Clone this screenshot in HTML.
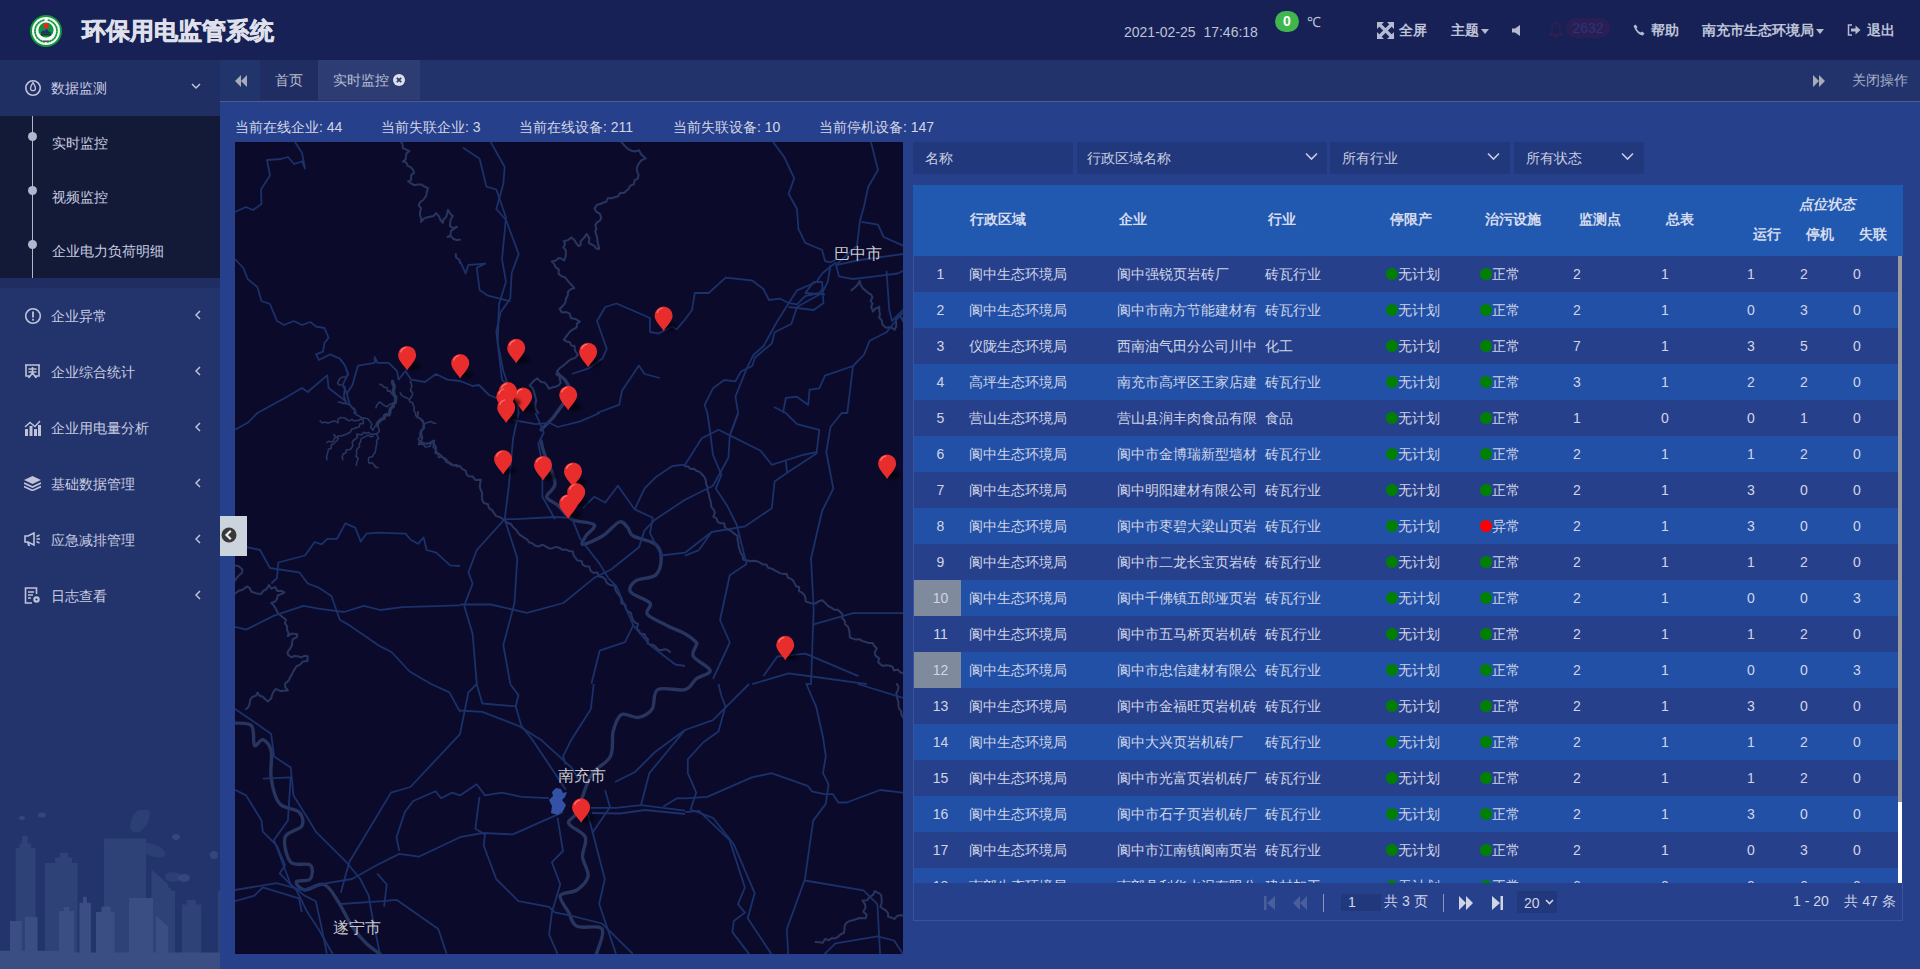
<!DOCTYPE html>
<html><head><meta charset="utf-8">
<style>
*{margin:0;padding:0;box-sizing:border-box}
html,body{width:1920px;height:969px;overflow:hidden;background:#27408c;font-family:"Liberation Sans",sans-serif;font-size:14px;color:#d4d8e6}
.abs{position:absolute}
#header{position:absolute;left:0;top:0;width:1920px;height:60px;background:#172156}
#title{position:absolute;left:82px;top:15px;font-size:24px;font-weight:bold;color:#dfe0ea;line-height:32px;letter-spacing:0px;-webkit-text-stroke:0.6px #dfe0ea}
.hdtxt{position:absolute;top:20px;line-height:20px;font-size:14px;color:#bec3d7;white-space:nowrap}
.hb{font-weight:bold}
#sidebar{position:absolute;left:0;top:60px;width:220px;height:909px;background:#23336c;overflow:hidden}
.mi{position:absolute;left:0;width:220px;height:56px}
.mi .t{position:absolute;left:51px;top:18px;line-height:20px;color:#c8cce0;font-size:14px;white-space:nowrap}
.mi .ar{position:absolute;left:193px;top:22px}
.sub{position:absolute;left:0;top:56px;width:220px;height:162px;background:#121a38}
.sub .t{position:absolute;left:52px;line-height:20px;color:#c8cce0;white-space:nowrap}
#tabbar{position:absolute;left:220px;top:60px;width:1700px;height:42px;background:#22336c;border-bottom:1px solid #4c5c92}
#content{position:absolute;left:220px;top:102px;width:1700px;height:867px;background:#27408c}
.stat{position:absolute;top:117px;line-height:20px;color:#d2d6e6;white-space:nowrap}
#map{position:absolute;left:235px;top:142px;width:668px;height:812px;background:#0b0a2b;overflow:hidden}
.flt{position:absolute;top:142px;height:32px;background:#22387c}
.flt .t{position:absolute;left:10px;top:6px;line-height:20px;color:#c8cde0}
.flt svg{position:absolute;top:10px}
#thead{position:absolute;left:913px;top:185px;width:990px;height:71px;background:#2259b0}
.th{position:absolute;font-weight:bold;color:#d6dcee;line-height:20px;white-space:nowrap}
#tbody{position:absolute;left:913px;top:256px;width:990px;height:627px;overflow:hidden;border-left:1px solid #3b539c}
.tr{position:absolute;left:0;width:985px;height:36px;line-height:36px;color:#d0d5e6;white-space:nowrap}
.tr.odd{background:#27408c}
.tr.even{background:#2250a6}
.tr span{position:absolute;top:0}
.c0{left:0;width:47px;text-align:center;padding-left:6px}
.c0.sel{background:#7f8a9c}
.c1{left:55px}.c2{left:203px}.c3{left:351px}
.c4{left:472px}.c5{left:566px}
.c6{left:659px}.c7{left:747px}.c8{left:833px}.c9{left:886px}.c10{left:939px}
.dot{display:inline-block;width:12px;height:12px;border-radius:50%;vertical-align:-1px;margin-right:0}
.dg{background:#008000}.dr{background:#ff0000}
#scroll{position:absolute;left:1898px;top:256px;width:4px;height:627px;background:#fff}
#thumb{position:absolute;left:1898px;top:256px;width:4px;height:546px;background:#9a9a9a}
#pager{position:absolute;left:913px;top:883px;width:990px;height:38px;border:1px solid #3b539c;border-top:none}
</style></head><body>
<div id="header">
  <svg class="abs" style="left:30px;top:15px" width="32" height="32" viewBox="0 0 32 32">
    <circle cx="16" cy="16" r="16" fill="#0e9a3a"/>
    <circle cx="16" cy="16" r="14" fill="#f6f8f5"/>
    <ellipse cx="13.2" cy="5.4" rx="1.6" ry="1" transform="rotate(-15 13.2 5.4)" fill="#1a9a45"/><ellipse cx="10.7" cy="6.4" rx="1.6" ry="1" transform="rotate(-29 10.7 6.4)" fill="#1a9a45"/><ellipse cx="8.5" cy="8.0" rx="1.6" ry="1" transform="rotate(-43 8.5 8.0)" fill="#1a9a45"/><ellipse cx="6.8" cy="10.0" rx="1.6" ry="1" transform="rotate(-57 6.8 10.0)" fill="#1a9a45"/><ellipse cx="5.6" cy="12.4" rx="1.6" ry="1" transform="rotate(-71 5.6 12.4)" fill="#1a9a45"/><ellipse cx="5.0" cy="15.0" rx="1.6" ry="1" transform="rotate(-85 5.0 15.0)" fill="#1a9a45"/><ellipse cx="5.1" cy="17.7" rx="1.6" ry="1" transform="rotate(-99 5.1 17.7)" fill="#1a9a45"/><ellipse cx="5.9" cy="20.3" rx="1.6" ry="1" transform="rotate(-113 5.9 20.3)" fill="#1a9a45"/><ellipse cx="7.2" cy="22.6" rx="1.6" ry="1" transform="rotate(-127 7.2 22.6)" fill="#1a9a45"/><ellipse cx="9.1" cy="24.5" rx="1.6" ry="1" transform="rotate(-141 9.1 24.5)" fill="#1a9a45"/><ellipse cx="11.4" cy="26.0" rx="1.6" ry="1" transform="rotate(-155 11.4 26.0)" fill="#1a9a45"/><ellipse cx="13.9" cy="26.8" rx="1.6" ry="1" transform="rotate(-169 13.9 26.8)" fill="#1a9a45"/><ellipse cx="17.9" cy="26.8" rx="1.6" ry="1" transform="rotate(170 17.9 26.8)" fill="#1a9a45"/><ellipse cx="20.5" cy="26.0" rx="1.6" ry="1" transform="rotate(156 20.5 26.0)" fill="#1a9a45"/><ellipse cx="22.8" cy="24.7" rx="1.6" ry="1" transform="rotate(142 22.8 24.7)" fill="#1a9a45"/><ellipse cx="24.7" cy="22.8" rx="1.6" ry="1" transform="rotate(128 24.7 22.8)" fill="#1a9a45"/><ellipse cx="26.0" cy="20.5" rx="1.6" ry="1" transform="rotate(114 26.0 20.5)" fill="#1a9a45"/><ellipse cx="26.8" cy="17.9" rx="1.6" ry="1" transform="rotate(100 26.8 17.9)" fill="#1a9a45"/><ellipse cx="27.0" cy="15.2" rx="1.6" ry="1" transform="rotate(86 27.0 15.2)" fill="#1a9a45"/><ellipse cx="26.5" cy="12.6" rx="1.6" ry="1" transform="rotate(72 26.5 12.6)" fill="#1a9a45"/><ellipse cx="25.3" cy="10.2" rx="1.6" ry="1" transform="rotate(58 25.3 10.2)" fill="#1a9a45"/><ellipse cx="23.6" cy="8.1" rx="1.6" ry="1" transform="rotate(44 23.6 8.1)" fill="#1a9a45"/><ellipse cx="21.5" cy="6.5" rx="1.6" ry="1" transform="rotate(30 21.5 6.5)" fill="#1a9a45"/><ellipse cx="19.0" cy="5.4" rx="1.6" ry="1" transform="rotate(16 19.0 5.4)" fill="#1a9a45"/>
    <circle cx="16" cy="15" r="7.6" fill="#0c9440"/>
    <circle cx="16" cy="11" r="2.7" fill="#e4261f"/>
    <path d="M10.5 18 L13 15 L14.5 16.2 L16.5 13.8 L19 16.5 L21.5 18 Z" fill="#2a2a8a"/>
    <rect x="11" y="18.3" width="10" height="2.2" fill="#1b3a22"/>
    <rect x="13" y="25.5" width="6" height="1.5" fill="#555"/>
  </svg>
  <div id="title">环保用电监管系统</div>
  <div class="hdtxt" style="left:1124px;top:22px">2021-02-25&nbsp; 17:46:18</div>
  <div class="abs" style="left:1275px;top:11px;width:24px;height:21px;border-radius:11px;background:#40b64e;color:#fff;font-weight:bold;text-align:center;line-height:21px;font-size:14px">0</div>
  <div class="hdtxt" style="left:1307px;top:12px;font-size:14px">℃</div>
  <svg class="abs" style="left:1377px;top:22px" width="17" height="17" viewBox="0 0 17 17" fill="#b4bad0">
    <path d="M0 0h7L0 7z M17 0v7L10 0z M0 17v-7l7 7z M17 17h-7l7-7z"/>
    <path d="M3 3L14 14M14 3L3 14" stroke="#b4bad0" stroke-width="3.2"/>
  </svg>
  <div class="hdtxt hb" style="left:1399px">全屏</div>
  <div class="hdtxt hb" style="left:1451px">主题</div>
  <svg class="abs" style="left:1481px;top:29px" width="8" height="5"><path d="M0 0h8L4 5z" fill="#b4bad0"/></svg>
  <svg class="abs" style="left:1512px;top:25px" width="8" height="11"><path d="M0 3.5h3L8 0v11L3 7.5H0z" fill="#b4bad0"/></svg>
  <svg class="abs" style="left:1549px;top:22px" width="14" height="16" viewBox="0 0 14 16"><path d="M7 1C4 1 3 4 3 7v4L1 13h12l-2-2V7c0-3-1-6-4-6zM5.5 14a1.5 1.5 0 0 0 3 0" fill="none" stroke="#33204c" stroke-width="1.3"/></svg>
  <div class="abs" style="left:1566px;top:18px;width:44px;height:20px;border-radius:10px;background:#2a1f55;color:#2a3574;font-size:14px;line-height:20px;text-align:center">2632</div>
  <svg class="abs" style="left:1633px;top:24px" width="12" height="12" viewBox="0 0 12 12"><path d="M2.5 0.5 L4.5 3 L3.5 4.5 Q5 7.5 7.5 8.5 L9 7.5 L11.5 9.5 L10 11.5 Q4 11 0.5 2z" fill="#b4bad0"/></svg>
  <div class="hdtxt hb" style="left:1651px">帮助</div>
  <div class="hdtxt hb" style="left:1702px">南充市生态环境局</div>
  <svg class="abs" style="left:1816px;top:29px" width="8" height="5"><path d="M0 0h8L4 5z" fill="#b4bad0"/></svg>
  <svg class="abs" style="left:1847px;top:24px" width="14" height="12" viewBox="0 0 14 12"><path d="M5 1H1.5v10H5" fill="none" stroke="#b4bad0" stroke-width="1.5"/><path d="M4 4.5h4.5V1.5L13.5 6 8.5 10.5V7.5H4z" fill="#b4bad0"/></svg>
  <div class="hdtxt hb" style="left:1867px">退出</div>
</div>

<div id="sidebar">
<div class="mi" style="top:0;background:#1f2e63">
  <svg class="abs" style="left:24px;top:19px" width="18" height="18" viewBox="0 0 18 18"><circle cx="9" cy="9" r="7.2" fill="none" stroke="#c0c4d8" stroke-width="1.6"/><path d="M9 3.5 C10.5 6 11.5 7.5 11.5 9.2 A2.5 2.5 0 0 1 6.5 9.2 C6.5 7.5 7.5 6 9 3.5z" fill="none" stroke="#c0c4d8" stroke-width="1.3"/></svg>
  <div class="t">数据监测</div>
  <svg class="abs" style="left:191px;top:23px" width="10" height="7"><path d="M1 1l4 4 4-4" fill="none" stroke="#c0c4d8" stroke-width="1.5"/></svg>
</div>
<div class="sub">
  <div class="abs" style="left:32px;top:0;width:1px;height:162px;background:#b2b6cc"></div>
  <div class="abs" style="left:28px;top:16px;width:9px;height:9px;border-radius:50%;background:#b2b6cc"></div>
  <div class="abs" style="left:28px;top:70px;width:9px;height:9px;border-radius:50%;background:#b2b6cc"></div>
  <div class="abs" style="left:28px;top:124px;width:9px;height:9px;border-radius:50%;background:#b2b6cc"></div>
  <div class="t" style="top:17px">实时监控</div>
  <div class="t" style="top:71px">视频监控</div>
  <div class="t" style="top:125px">企业电力负荷明细</div>
</div>
<div class="abs" style="left:0;top:218px;width:220px;height:10px;background:#1f2d62"></div>

<div class="mi" style="top:228px">
  <svg class="abs" style="left:24px;top:19px" width="18" height="18" viewBox="0 0 18 18"><circle cx="9" cy="9" r="7.3" fill="none" stroke="#c0c4d8" stroke-width="1.6"/><rect x="8.1" y="4.5" width="1.8" height="6" fill="#c0c4d8"/><rect x="8.1" y="11.8" width="1.8" height="1.8" fill="#c0c4d8"/></svg>
  <div class="t">企业异常</div>
  <svg class="abs" style="left:195px;top:22px" width="6" height="10"><path d="M5 1L1 5l4 4" fill="none" stroke="#c0c4d8" stroke-width="1.5"/></svg>
</div>
<div class="mi" style="top:284px">
  <svg class="abs" style="left:24px;top:19px" width="17" height="17" viewBox="0 0 17 17"><path d="M1 2h15M2 2v11h5M15 2v11h-5M4.5 6h8M4.5 9h8M8.5 4v6M8.5 10l-4 5M8.5 10l4 5" fill="none" stroke="#c0c4d8" stroke-width="1.6"/></svg>
  <div class="t">企业综合统计</div>
  <svg class="abs" style="left:195px;top:22px" width="6" height="10"><path d="M5 1L1 5l4 4" fill="none" stroke="#c0c4d8" stroke-width="1.5"/></svg>
</div>
<div class="mi" style="top:340px">
  <svg class="abs" style="left:24px;top:20px" width="17" height="16" viewBox="0 0 17 16"><rect x="1" y="9" width="3" height="7" fill="#c0c4d8"/><rect x="5.5" y="6" width="3" height="10" fill="#c0c4d8"/><rect x="10" y="9" width="3" height="7" fill="#c0c4d8"/><rect x="14" y="5" width="3" height="11" fill="#c0c4d8"/><path d="M1 7L6 2.5l5 4L16 1" fill="none" stroke="#c0c4d8" stroke-width="1.4"/></svg>
  <div class="t">企业用电量分析</div>
  <svg class="abs" style="left:195px;top:22px" width="6" height="10"><path d="M5 1L1 5l4 4" fill="none" stroke="#c0c4d8" stroke-width="1.5"/></svg>
</div>
<div class="mi" style="top:396px">
  <svg class="abs" style="left:24px;top:20px" width="17" height="15" viewBox="0 0 17 15"><path d="M8.5 0L17 4 8.5 8 0 4z" fill="#c0c4d8"/><path d="M0 7l8.5 4L17 7M0 10.5l8.5 4 8.5-4" fill="none" stroke="#c0c4d8" stroke-width="1.6"/></svg>
  <div class="t">基础数据管理</div>
  <svg class="abs" style="left:195px;top:22px" width="6" height="10"><path d="M5 1L1 5l4 4" fill="none" stroke="#c0c4d8" stroke-width="1.5"/></svg>
</div>
<div class="mi" style="top:452px">
  <svg class="abs" style="left:24px;top:20px" width="17" height="15" viewBox="0 0 17 15"><path d="M1 4h3l6-3v12l-6-3H1z" fill="none" stroke="#c0c4d8" stroke-width="1.6"/><path d="M3 10l1 4h2l-1-4" fill="#c0c4d8"/><path d="M12.5 4.5l3-1.5M12.5 7h3.5M12.5 9.5l3 1.5" stroke="#c0c4d8" stroke-width="1.4"/></svg>
  <div class="t">应急减排管理</div>
  <svg class="abs" style="left:195px;top:22px" width="6" height="10"><path d="M5 1L1 5l4 4" fill="none" stroke="#c0c4d8" stroke-width="1.5"/></svg>
</div>
<div class="mi" style="top:508px">
  <svg class="abs" style="left:24px;top:19px" width="17" height="17" viewBox="0 0 17 17"><path d="M8 16H1.5V1h11v6" fill="none" stroke="#c0c4d8" stroke-width="1.6"/><path d="M4 5h6M4 8h5M4 11h3" stroke="#c0c4d8" stroke-width="1.4"/><circle cx="12.5" cy="12.5" r="3.2" fill="#c0c4d8"/><circle cx="12.5" cy="12.5" r="1.1" fill="#22326a"/></svg>
  <div class="t">日志查看</div>
  <svg class="abs" style="left:195px;top:22px" width="6" height="10"><path d="M5 1L1 5l4 4" fill="none" stroke="#c0c4d8" stroke-width="1.5"/></svg>
</div>
<svg class="abs" style="left:0;top:750px" width="220" height="159" viewBox="0 0 220 159">
  <g fill="#2e4277">
    <path d="M15.7 159V38h3.7v-4.4h2.6v-7.8h5.7v7.8h3.4V38h4.4V159z"/>
    <path d="M45 159V53h10v-5.6h5v-4.6h8.3v4.6h3.7V53h5.6V159z"/>
    <path d="M104 159V28.4h42V159z"/>
    <path d="M151.5 159V59.4L168 74.2V159z"/>
    <path d="M163.5 159V80.7h3.7v-3h3.7v3h4.1V159z"/>
    <path d="M182 159V94.5h4.6v-4.6h9.2v4.6h5.5V159z"/>
    <path d="M218 159V80.7h2V159z"/>
    <ellipse cx="140" cy="10" rx="8" ry="14" transform="rotate(30 140 10)" opacity="0.8"/>
    <ellipse cx="152" cy="40" rx="14" ry="6" transform="rotate(20 152 40)" opacity="0.8"/>
    <ellipse cx="173" cy="67" rx="8" ry="5" opacity="0.8"/>
  </g>
  <g fill="#3a4e84">
    <path d="M10 159V111h11.8V159z"/>
    <path d="M25 159V107h12.5V159z"/>
    <path d="M0 159V140.7h59V159z"/>
    <path d="M59 159V101h4.7v-4h5.3v4h5V159z"/>
    <path d="M79.4 159V92.7h3.7v-5.9h3.7v5.9h4.1V159z"/>
    <path d="M96 159V102h5.5v-5.6h9.2v5.6h3.8V159z"/>
    <path d="M129 159V88h24V159z"/>
    <path d="M156 159V105.6L168 116.7V159z"/>
    <path d="M0 159V142.5h220V159z"/>
    <ellipse cx="22" cy="8" rx="3" ry="2" opacity="0.7"/>
    <ellipse cx="42" cy="5" rx="4" ry="2.5" opacity="0.7"/>
    <ellipse cx="176" cy="27" rx="4" ry="3" opacity="0.7"/>
    <ellipse cx="184" cy="68" rx="6" ry="4" opacity="0.7"/>
    <ellipse cx="214" cy="45" rx="4" ry="4" opacity="0.7"/>
  </g>
</svg>

</div>

<div id="tabbar">
  <div class="abs" style="left:0;top:0;width:40px;height:40px;background:#22346c"></div>
  <svg class="abs" style="left:15px;top:15px" width="13" height="12"><path d="M0 6L6 0v12z M6 6L12 0v12z" fill="#a8acb8"/></svg>
  <div class="abs" style="left:40px;top:0;width:58px;height:40px;background:#1f2d62"></div>
  <div class="abs" style="left:55px;top:10px;line-height:20px;color:#b8bdd0">首页</div>
  <div class="abs" style="left:98px;top:0;width:102px;height:40px;background:#2d3d74"></div>
  <div class="abs" style="left:113px;top:10px;line-height:20px;color:#b8bdd0">实时监控</div>
  <svg class="abs" style="left:173px;top:14px" width="12" height="12"><circle cx="6" cy="6" r="6" fill="#dde0e8"/><path d="M3.8 3.8l4.4 4.4M8.2 3.8l-4.4 4.4" stroke="#2d3d74" stroke-width="1.8"/></svg>
  <svg class="abs" style="left:1593px;top:15px" width="13" height="12"><path d="M0 0l6 6-6 6z M6 0l6 6-6 6z" fill="#a8acb8"/></svg>
  <div class="abs" style="left:1632px;top:10px;line-height:20px;color:#a8aec4">关闭操作</div>
</div>

<div id="content"></div>
<div class="stat" style="left:235px">当前在线企业: 44</div>
<div class="stat" style="left:381px">当前失联企业: 3</div>
<div class="stat" style="left:519px">当前在线设备: 211</div>
<div class="stat" style="left:673px">当前失联设备: 10</div>
<div class="stat" style="left:819px">当前停机设备: 147</div>

<div id="map">
<svg width="668" height="812" viewBox="0 0 668 812" style="position:absolute;left:0;top:0">
<g fill="none" stroke="#28355f" stroke-width="2" stroke-linejoin="round" stroke-linecap="round">
<polyline points="165.6,-0.3 167.6,2.2 167.7,6.1 174.4,9.0 171.6,11.1 170.9,14.2 170.7,17.4 168.0,19.6 171.4,20.6 172.6,23.9 175.7,25.2 177.8,27.4 179.2,30.8 176.0,33.4 176.2,37.9 173.2,39.5 176.3,41.5 179.5,43.2 183.2,42.5 186.7,42.4 188.4,44.0 193.0,46.2 192.0,49.4 191.4,53.2 189.7,56.0 187.7,58.5 185.2,59.9 183.6,63.4 186.1,66.5 185.0,69.9 185.0,73.2 186.2,76.4 186.1,79.9 188.6,76.9 191.8,75.4 195.0,74.7 198.7,73.9 201.2,71.1 203.9,74.1 205.4,77.9 207.8,80.9 208.4,77.6 211.2,75.1 212.0,71.9 213.0,67.8 215.0,71.4 217.9,74.0 215.7,77.3 215.2,81.1 214.9,84.2 218.3,86.2 222.1,84.8 219.1,86.9 216.0,88.9 215.5,93.0 212.4,95.0 215.9,94.1 218.6,97.0 221.6,98.0 225.0,97.8"/>
<polyline points="220.8,112.1 221.1,115.5 224.3,117.7 225.0,121.0"/>
<polyline points="386.5,0.4 388.6,2.5 390.6,4.8 392.7,6.8 396.3,8.7 400.0,9.5 404.0,8.3 406.2,12.3 410.7,16.4 406.1,18.4 403.4,22.3 401.8,25.7 402.0,29.2 403.6,32.9 402.8,36.6 399.6,38.3 398.8,42.4 395.2,43.7 393.5,46.9 391.2,49.0 389.0,51.0 385.3,50.8 383.2,54.3 379.9,55.3 376.6,56.3 372.8,56.1 371.2,59.9 368.0,60.6 365.3,62.1 362.1,62.8 359.5,66.3 361.2,69.6 364.9,71.8 366.3,75.6 365.1,78.5 362.0,80.4 360.3,83.1 361.5,87.2 360.1,89.0 361.1,92.4 362.2,95.8 362.5,99.5 363.3,102.9 364.3,107.0 361.1,106.4 359.0,103.7 356.2,102.4 353.8,100.6 354.4,96.1 351.5,91.8 350.0,94.7 347.8,97.0 345.7,99.4 345.6,103.3 343.6,104.0 341.4,101.4 339.8,98.5 336.5,95.4 332.7,98.2 328.8,99.2 330.1,102.1 328.4,105.3 330.7,108.2 330.9,111.2 330.6,114.3 329.3,118.5 326.1,116.5 323.8,115.9 320.4,118.8 316.8,119.4 319.2,122.1 320.7,125.4 323.8,127.4 323.7,132.1 326.7,134.3 330.1,135.4 332.1,137.9 334.1,140.4 336.3,142.7 339.3,146.1 335.3,147.4 333.0,149.9 332.7,153.8 331.0,156.5 330.5,160.1 328.8,162.8 326.4,165.2 324.6,167.0 326.8,170.5 331.1,170.1 334.5,171.4 336.0,176.1 340.2,176.9 344.9,179.6 341.9,181.6 341.7,185.4 338.5,187.2 335.6,188.8 333.1,191.9 330.7,195.1 328.8,197.6 331.4,199.4 334.5,200.1 336.4,203.5 339.5,204.0 340.0,208.5 342.8,212.8 340.3,215.9 336.0,217.2 333.0,219.4 330.5,221.8 327.7,224.0 324.9,226.0 322.0,229.2 324.7,232.6 324.6,236.6 325.8,240.9 323.6,243.3 320.8,244.7 317.6,245.3 313.9,246.7 312.0,243.3 309.8,240.5 306.0,239.9 302.3,236.4 298.7,238.9 294.7,243.4 297.6,246.0 298.8,249.0 299.6,252.1 300.5,255.2 301.2,258.3 300.5,261.8 300.3,265.1 301.3,268.2 303.3,271.0"/>
<polyline points="616.4,148.3 619.3,145.9 622.0,143.5 624.6,138.9 625.8,143.2 628.0,146.5 630.6,148.6 633.0,150.8 636.1,152.5 637.5,155.5 635.6,158.8 637.5,161.7 636.1,165.0 638.1,169.6 640.2,166.6 643.0,165.7 644.4,164.6 644.2,168.6 645.1,172.8 643.9,175.3 646.7,178.2 647.6,182.9 651.1,185.7 655.5,184.9 659.6,187.8 661.2,184.5 661.1,180.7 661.1,176.8 662.6,173.6 666.3,175.3 668.0,179.0"/>
<polyline points="183.1,270.0 182.4,274.8 185.4,276.9 187.8,279.5 188.5,281.8 189.3,285.5 186.9,288.3 186.1,291.6 187.3,295.5 186.3,298.7 184.5,301.0 188.0,300.8 191.4,302.0 194.9,300.8 198.7,301.6 201.1,305.4 200.3,311.1 204.3,311.9 206.9,314.4 209.4,317.0 211.5,320.2 215.3,321.0 218.1,323.6 221.7,323.1 224.9,324.1 227.0,326.9 230.6,328.6 231.5,332.3 233.7,334.2 237.6,334.5 240.6,338.1 245.8,337.8 245.2,341.3 244.7,344.6 245.8,347.8 247.1,351.0 246.9,354.3 247.2,357.7 248.8,361.0 253.0,362.3 253.9,366.1 257.0,368.2 258.9,370.9 261.1,374.1 264.6,375.0 267.6,376.8 270.4,379.1 272.8,381.0 276.2,382.2 277.8,384.9 280.2,387.0 282.3,389.4 283.9,392.1 286.6,393.9 289.2,395.8 292.1,397.3 294.1,400.4 297.3,401.3 300.3,403.7 303.6,404.5 307.3,402.7 310.5,404.3 313.6,406.2 316.9,406.4 320.8,404.9 324.1,405.7 327.1,407.7 330.7,407.4 333.8,408.9 337.9,409.6 338.6,413.4 340.6,415.9 342.5,418.5 346.6,418.9 347.6,422.6 350.5,424.3 354.3,424.6 355.6,428.7 358.2,430.8 362.5,430.4 363.7,434.4 367.7,435.1 370.3,437.5 372.0,441.2 375.2,443.0 379.8,443.8 380.3,447.0 381.4,449.9 383.4,452.4 385.3,454.9 386.3,457.9 386.4,461.4 390.4,462.8 390.7,466.7 392.9,469.3 396.0,471.2 396.9,474.7 397.9,478.0 399.9,480.4 403.0,482.0 401.8,486.4 404.1,488.6 405.2,491.5 409.5,492.3 410.7,495.2 413.0,497.3 412.5,501.3 415.3,502.5 418.3,503.0 420.8,504.9 423.1,507.6 426.1,508.2 429.6,507.3 432.5,507.8 435.0,510.0"/>
<polyline points="0.5,451.3 3.8,448.7 7.7,447.8 12.0,444.4 14.8,446.1 16.4,449.8 19.7,450.7 21.5,451.5 26.1,451.9 28.2,448.9 31.4,447.3 34.0,442.9 36.2,446.6 40.2,445.1 42.3,448.9 46.0,448.7 49.4,450.4 46.3,452.1 42.9,453.2 41.9,457.2 39.7,459.8 36.2,461.0 38.6,463.4 40.4,466.0 41.7,468.8 42.9,470.9 45.4,473.2 47.9,475.4 51.0,477.7 49.9,481.3 52.1,484.4 51.9,487.9 53.6,491.1 52.8,494.1 56.7,491.6 62.3,492.2 61.7,495.4 57.9,497.0 57.1,500.1 57.0,503.3 55.0,506.8 52.5,510.1 53.0,512.8 56.3,515.3 59.6,514.0 62.9,514.2 66.1,515.4 69.4,513.8 72.7,514.2 72.5,519.1 68.0,519.5 64.7,522.9 61.5,524.2 59.9,526.9 58.2,529.4 56.9,532.4 55.2,534.9 54.1,538.0 52.0,540.2 50.3,540.9 50.2,545.2 52.9,548.5 49.2,548.8 45.5,549.1 40.8,546.9 38.6,549.6 37.1,552.8 36.1,556.4 32.8,559.4 30.2,557.2 27.8,554.7 24.3,553.5 22.5,550.5 21.1,553.6 17.2,555.0 15.3,557.7 14.7,561.4 13.7,564.7 11.1,567.0"/>
<polyline points="-1.0,423.3 3.9,424.2 7.4,427.8 6.8,431.3 3.9,433.3 1.8,435.9 0.0,438.7"/>
<polyline points="450.0,324.2 453.3,324.6 455.6,327.0 459.2,326.8 461.6,329.0 464.7,329.9 467.1,332.5 469.5,335.2 470.8,338.4 471.1,342.0 472.5,345.1 472.5,348.7 473.9,351.8 474.3,355.2 475.4,358.3 476.0,361.6 476.3,364.9 478.8,367.7 479.8,370.8 478.3,374.6 481.5,376.4 482.8,379.8 485.4,381.3 489.1,381.3 489.9,385.3 492.2,387.2 495.2,388.2 497.5,390.2 499.3,391.7 502.7,394.0 502.4,397.6 503.5,400.8 503.5,404.3 504.6,407.4 505.6,410.6 507.5,413.4 508.3,417.8 511.7,418.2 514.9,419.3 518.6,418.8 521.9,419.2 525.0,420.6 527.9,422.4 531.3,422.6 533.5,426.1 536.7,426.6 539.4,428.2 542.2,429.6 544.9,431.1 548.0,431.9 551.5,431.7 553.0,435.7 555.6,436.6 558.0,438.6 559.6,441.2 560.9,444.0 564.3,445.3 564.0,449.2 567.1,450.7 569.3,452.9 570.4,455.8 570.7,459.2 572.9,460.3 576.8,461.4 580.4,461.6 583.6,459.2 587.3,458.2 589.6,460.2 591.6,462.5 593.9,464.5 596.7,465.8 599.1,467.7 602.7,467.8 605.0,469.7 607.5,472.2 607.1,476.0 609.7,478.7 610.0,482.2 613.1,484.7 614.1,488.0 614.6,491.4 614.8,495.5 617.9,496.6 621.1,497.6 624.7,497.3 627.6,499.2 630.9,500.0 634.0,501.1 637.6,500.9 638.9,503.5 641.9,506.5 639.7,510.3 640.4,513.6 644.2,516.5 643.1,520.0 645.4,522.3 648.0,523.9 651.5,523.3 654.5,523.8 657.5,524.8 659.0,528.5 663.0,527.6 665.1,530.2 668.0,531.3"/>
<polyline points="580.6,800.1 584.2,800.3 587.8,800.8 590.0,796.9 593.9,798.2 596.7,796.1 600.3,796.4 603.2,794.7 605.3,792.5 609.0,790.9 609.4,787.4 609.7,783.7 611.3,780.9 614.5,779.0 617.8,778.3 621.1,777.2 624.3,776.0 627.8,776.2 630.5,776.3 631.8,772.7 628.3,769.8 630.4,766.0 630.2,762.6 627.5,758.5 632.2,758.2 634.5,755.2 637.8,753.2 639.9,749.0 642.6,750.7 645.4,752.2 646.3,753.5 646.7,757.6 646.6,761.5 645.3,764.8 647.9,766.7 650.7,768.3 652.8,770.7 653.2,774.8 656.1,775.4 659.6,777.0 661.9,773.9 664.9,773.3 668.0,773.4"/>
<polyline points="661.9,542.0 663.4,544.9 663.1,547.9 661.3,551.2 661.9,554.2 662.5,557.1 663.5,560.1 663.4,563.5 664.1,566.6 666.2,569.3 666.4,572.6 668.0,575.5"/>
</g><g fill="none" stroke="#28355f" stroke-width="1.6" stroke-linejoin="round" stroke-linecap="round">
<polyline points="85.0,278.9 87.4,280.9 89.9,280.1 92.3,280.9 94.7,280.6 97.1,279.6 99.6,278.9 103.0,280.9 102.9,277.3 105.4,275.6 107.8,275.7 110.1,276.1 112.1,277.8 114.2,278.9 116.9,277.4 118.9,279.0 121.1,278.5 123.6,278.4 125.7,277.3 128.3,275.9 130.6,276.3 132.8,276.8 133.9,278.3 135.6,280.2 136.9,282.3 135.5,285.0 137.9,288.2 139.0,285.7 140.5,283.9 142.9,283.6"/>
<polyline points="103.4,260.1 105.7,260.2 107.8,261.4 110.2,261.2 112.4,262.0 114.8,262.6 116.3,264.5 117.7,266.4 119.5,266.4 119.8,268.9 119.1,270.9 121.3,272.7 123.8,273.9 126.3,275.5 128.1,278.1 128.4,281.8 125.1,281.6 124.1,285.0 121.3,285.6 118.8,286.7 116.5,287.3 115.5,290.0 113.4,291.0 111.4,292.2 108.9,293.0 106.6,294.0 103.7,293.8 101.6,295.2 99.5,296.0 98.5,299.1 96.4,300.0 93.6,299.2 91.8,300.6"/>
<polyline points="111.1,228.3 112.9,230.2 113.3,232.3 111.1,234.9 107.9,235.0 105.3,236.0 104.0,238.0 102.6,241.3 104.2,243.0 107.4,243.0 109.9,244.9 110.1,247.1 109.3,249.6 109.2,251.9 108.8,254.3 109.8,256.5 110.3,258.7 111.1,260.9"/>
<polyline points="144.7,242.2 147.3,243.2 149.1,245.1 152.0,245.7 152.7,249.1 155.4,248.9 156.3,251.7 158.8,251.8"/>
<polyline points="140.9,265.7 141.9,262.9 144.4,260.0 146.9,261.5 149.2,263.6 152.2,264.8 154.4,262.2 157.6,262.1"/>
<polyline points="165.1,250.8 166.7,253.3 168.9,254.8 171.4,255.8 174.1,257.1 174.7,259.7 177.5,260.7 178.2,263.2 179.3,265.5 178.8,268.5 180.5,270.7 180.7,273.5 182.6,275.6 185.3,276.6 187.5,278.1 189.3,281.5 191.6,281.0 194.0,280.1 196.4,279.5 198.5,281.1 200.8,281.3"/>
<polyline points="175.3,239.4 176.2,241.6 176.9,243.9 176.0,246.2 175.5,248.6 177.6,250.9 177.4,253.4 175.9,255.4 174.7,257.5"/>
<polyline points="189.6,282.6 188.0,284.3 188.4,286.9 185.9,288.3 185.2,290.4 184.9,292.7 185.4,295.1 183.0,297.1 184.6,299.6 183.5,302.6 186.3,301.9 188.6,302.8 190.3,305.0 192.4,304.8 195.2,304.3 195.6,301.8 196.4,299.5 199.3,298.3 199.0,300.6 198.6,303.0 198.1,305.4 200.4,306.9 201.4,309.6 203.3,311.6 203.5,315.4 206.9,314.9 209.3,316.0 211.5,317.5 213.2,319.6 214.9,322.4 217.4,323.0 219.9,323.3 222.2,324.7 225.0,324.0"/>
<polyline points="142.8,284.7 144.2,287.1 144.3,289.4 142.0,291.4 142.2,293.7 143.7,296.3 141.5,298.3 141.9,300.7 141.4,303.0 141.0,305.4 140.6,307.8 140.2,310.2 138.6,312.2 137.5,314.6 134.0,315.6 133.3,317.9 134.0,321.2 137.2,320.8 139.0,322.5 140.4,325.0 142.9,325.6"/>
<polyline points="142.0,291.8 139.1,292.1 136.1,292.4 133.8,290.5 131.6,291.2 129.0,290.2 127.2,292.6 124.8,292.6 121.5,292.2 122.5,295.4 120.4,297.0 118.3,298.5 117.2,300.7 117.9,303.7 116.5,306.1 114.8,307.8 111.4,307.8 111.0,310.8 108.1,311.9 107.2,314.6 107.7,317.7"/>
<polyline points="138.4,294.2 135.8,294.7 133.1,293.1 130.6,294.4 128.7,295.4 126.1,296.9 125.5,299.8 124.2,301.9 124.6,304.6 122.2,307.0 121.3,309.6 121.9,311.9 120.9,314.1 123.2,316.6 122.4,318.8 121.6,321.0 121.3,323.3"/>
<polyline points="98.8,292.4 100.5,294.6 103.4,296.3 102.2,298.4 100.3,300.0 98.7,301.8 96.2,303.0 96.3,306.2 93.3,307.3 92.9,309.9 92.1,312.4 91.6,315.0 91.8,317.7"/>
<polyline points="142.0,282.7 143.1,280.4 144.8,278.7 146.6,277.1 149.1,276.4 149.6,273.5 151.5,272.6 154.1,272.9 154.7,270.8 155.0,268.4 155.8,266.1 158.1,264.4 158.3,262.0 160.5,260.0 160.4,257.7 160.9,255.4 159.0,252.9 158.7,250.9 158.3,248.7 159.0,246.2 159.1,243.8 157.9,241.7 157.6,239.4" stroke-width="3.4"/>
</g><g fill="none" stroke="#28355f" stroke-width="3.4" stroke-linejoin="round" stroke-linecap="round">
<path d="M306.0,299.0 C306.5,300.8 306.5,303.0 308.8,310.0 C311.1,317.0 319.5,333.4 320.0,340.9 C320.5,348.4 311.1,351.1 311.6,354.8 C312.1,358.5 318.6,359.5 322.8,363.2 C327.0,366.9 330.7,373.9 336.8,377.2 C342.9,380.5 356.9,380.0 359.2,382.8 C361.5,385.6 352.7,390.7 350.8,394.0 C348.9,397.3 345.2,402.4 348.0,402.4 C350.8,402.4 361.4,397.7 367.5,394.0 C373.6,390.3 380.1,381.4 384.3,380.0 C388.5,378.6 390.4,383.3 392.7,385.6 C395.0,387.9 393.6,391.2 398.3,394.0 C403.0,396.8 416.0,398.7 420.6,402.4 C425.2,406.1 426.2,411.2 426.2,416.3 C426.2,421.4 424.8,429.4 420.6,433.1 C416.4,436.8 405.2,435.9 401.0,438.7 C396.8,441.5 393.2,446.2 395.5,449.9 C397.8,453.6 412.2,457.3 415.0,461.0 C417.8,464.7 409.5,468.5 412.3,472.2 C415.1,475.9 425.5,480.1 431.8,483.4 C438.1,486.7 445.1,489.0 450.0,491.8 C454.9,494.6 459.1,498.1 461.0,500.0 C462.9,501.9 461.6,500.9 461.2,503.3 C460.8,505.7 456.1,510.3 458.4,514.5 C460.7,518.7 474.7,524.8 475.2,528.5 C475.7,532.2 465.4,533.7 461.2,536.9 C457.0,540.1 456.4,545.8 450.0,547.6 C443.6,549.4 428.2,544.4 422.7,547.6 C417.2,550.8 420.4,562.4 417.2,567.0 C413.9,571.6 408.3,574.5 403.2,575.4 C398.1,576.3 390.7,570.3 386.5,572.6 C382.3,574.9 380.1,582.3 378.2,589.3 C376.3,596.3 379.1,607.0 375.4,614.4 C371.7,621.8 361.5,624.6 355.9,633.9 C350.3,643.2 345.7,662.2 342.0,670.1 C338.3,678.0 332.2,677.0 333.6,681.2 C335.0,685.4 348.0,689.6 350.3,695.2 C352.6,700.8 347.0,708.2 347.5,714.7 C348.0,721.2 354.0,728.6 353.1,734.1 C352.2,739.6 346.6,744.8 342.0,748.0 C337.4,751.2 326.7,749.9 325.3,753.6 C323.9,757.3 330.8,765.2 333.6,770.3 C336.4,775.4 336.4,781.5 342.0,784.3 C347.6,787.1 363.8,782.4 367.0,787.0 C370.2,791.6 362.4,807.7 361.5,811.8"/>
<path d="M306.0,287.8 C307.9,285.9 314.6,279.4 317.2,276.6 C319.8,273.8 319.6,273.4 321.4,271.0 C323.2,268.6 325.7,265.5 328.0,262.0 C330.3,258.5 334.7,254.0 335.0,250.0 C335.3,246.0 332.2,241.0 330.0,238.0 C327.8,235.0 323.3,233.0 322.0,232.0"/>
<path d="M0.0,581.0 C2.8,581.5 13.4,580.1 16.7,583.8 C19.9,587.5 17.6,601.0 19.5,603.3 C21.4,605.6 25.0,596.8 27.8,597.7 C30.6,598.6 34.8,602.3 36.2,608.8 C37.6,615.3 34.8,627.9 36.2,636.7 C37.6,645.5 40.0,656.2 44.6,661.7 C49.2,667.2 60.3,666.3 64.0,670.0 C67.7,673.7 69.1,679.8 66.8,684.0 C64.5,688.2 52.0,689.2 50.1,695.2 C48.2,701.2 51.5,715.6 55.7,720.2 C59.9,724.8 72.0,720.2 75.2,723.0 C78.5,725.8 77.5,734.2 75.2,737.0 C72.9,739.8 62.2,737.9 61.3,739.7 C60.4,741.5 65.0,747.5 69.6,748.0 C74.2,748.5 83.5,740.6 89.1,742.5 C94.7,744.4 98.3,752.2 103.0,759.2 C107.7,766.2 112.3,777.3 117.0,784.3 C121.7,791.3 126.3,796.4 130.9,801.0 C135.5,805.6 142.5,810.0 144.8,811.8"/>
</g><g fill="none" stroke="#1a3169" stroke-width="1.8" stroke-linejoin="round">
<polyline points="0.0,70.0 11.0,65.0 18.0,68.0 26.5,62.0 26.0,47.5 35.0,33.5 32.0,18.0 46.0,17.0 53.0,15.0 59.0,22.0 67.0,19.5 70.0,26.5 67.0,11.0 60.0,0.0"/>
<polyline points="0.0,117.0 8.4,126.0 12.6,137.0 22.4,145.0 26.5,159.0 35.0,162.0 42.0,179.0 49.0,183.0 58.7,179.0 67.0,183.0 75.5,180.0 81.0,184.5 89.4,186.0 93.6,195.6 89.4,201.0 88.0,209.6 81.0,212.4 84.0,218.0 95.0,212.4 104.8,216.6 110.0,223.6 113.0,232.0 107.6,243.0 111.8,251.5 114.6,262.7 121.6,271.0"/>
<polyline points="0.0,287.8 12.6,280.8 22.4,271.0 50.3,255.7 67.0,246.0 72.7,250.0 92.2,233.4 93.6,246.0 111.8,260.0"/>
<polyline points="111.8,251.5 117.4,243.0 123.0,223.6 139.7,220.8 139.7,215.0 142.5,220.8 153.7,220.8 162.0,229.0 163.5,237.6 170.5,229.0 176.0,237.6 190.0,240.0 201.0,232.0 212.4,237.6 225.0,239.0 237.6,244.0 244.0,243.0 254.0,253.0 264.0,257.0"/>
<polyline points="255.7,0.0 269.7,25.0 268.3,42.0 261.3,67.0 271.0,78.0 283.7,112.0 276.7,131.0 275.3,156.5 265.5,170.5 261.3,190.0 264.0,212.4 267.0,237.6 281.0,251.5 283.7,271.0 278.1,296.2 273.9,343.7 269.7,377.2 282.3,416.3 279.5,461.0 268.3,503.0 275.3,541.8"/>
<polyline points="227.8,5.6 244.6,16.8 251.5,44.7 261.3,47.5 271.0,75.5 267.0,117.4 271.0,139.7 264.0,162.0 262.7,201.0 268.3,229.0 274.0,246.0"/>
<polyline points="225.0,118.8 230.6,131.4 233.4,123.0 250.2,121.6 241.8,125.8 244.6,148.0 253.0,153.7 275.3,159.3"/>
<polyline points="336.8,232.0 353.6,226.4 367.5,216.6 371.7,206.8 362.0,179.0 370.3,165.0 381.5,161.5 415.0,176.0 415.0,190.0 423.4,191.5 437.4,184.5 441.6,187.3 450.0,177.5 457.0,168.0 459.8,151.0 473.8,151.0 490.6,135.7 517.2,138.5 528.4,147.0 534.0,158.0 545.2,156.7 553.6,161.0 562.0,162.3 570.3,154.0 584.3,151.0 588.5,145.5"/>
<polyline points="362.0,271.0 384.3,262.7 387.0,248.7 403.9,223.6 409.5,232.0 424.8,236.0"/>
<polyline points="538.2,0.0 549.4,15.4 559.2,36.4 553.6,51.8 562.0,67.0 563.4,86.8 570.3,100.8 580.0,105.0 587.1,107.8 590.0,119.0 595.5,120.3 601.0,117.5"/>
<polyline points="636.0,0.0 643.0,28.0 633.3,44.8 629.0,64.4 625.0,78.4 622.0,103.6 601.0,123.0 604.0,134.3 618.0,137.0 640.3,134.3 662.7,131.5 668.0,128.7"/>
<polyline points="626.3,79.8 643.0,82.6 648.7,95.0 668.0,103.6"/>
<polyline points="601.0,123.0 625.0,118.0 668.0,112.0"/>
<polyline points="601.0,120.3 587.1,131.5 581.5,140.0 562.0,148.3 542.4,179.0 528.4,204.3 518.6,212.7 511.6,226.7 500.4,254.7 503.2,271.0 494.8,293.4 493.4,315.8 478.0,343.8 450.0,357.8 420.6,377.2 409.5,388.4 404.0,405.2 376.0,427.5 359.2,435.9 328.4,461.0 292.0,470.8 255.7,462.5 225.0,462.5"/>
<polyline points="595.5,123.0 592.7,140.0 587.1,151.0 562.0,165.0 556.3,182.0 539.6,190.3 536.8,201.5 520.0,215.5 517.2,224.0 506.0,229.5 500.4,239.3 489.2,238.0 478.0,246.3 469.6,263.0 472.4,271.0 475.2,290.6 478.0,313.0 486.4,332.6 480.8,346.6 492.0,363.4 501.8,383.0 511.6,422.1 494.8,433.3 485.0,478.0 494.8,500.5 478.0,536.9"/>
<polyline points="553.6,165.0 578.7,168.0 588.5,161.0 587.1,140.0 578.7,140.0 570.3,151.0 590.0,152.5"/>
<polyline points="548.0,271.0 550.8,256.0 562.0,254.7 573.2,263.0 574.6,247.7 584.3,246.3 590.0,233.7 618.0,224.0 629.0,212.7 634.7,198.7 651.5,190.3 662.7,176.3 668.0,170.7"/>
<polyline points="618.0,224.0 612.3,271.0 606.7,271.0 595.5,285.0 591.3,310.2 598.3,346.6 587.1,369.0 576.0,416.5 578.7,466.9 576.0,542.2 571.3,542.0 581.0,564.3 588.0,595.0 590.8,614.5 588.0,631.2 593.6,642.4 590.8,661.9 578.2,678.6 569.9,737.2 551.8,787.3 553.2,812.1"/>
<polyline points="651.5,128.7 654.3,168.0 657.0,179.0 668.0,168.0"/>
<polyline points="11.2,405.0 25.0,408.0 35.0,426.0 44.7,427.5 64.3,430.3 72.7,441.5 83.8,445.7 96.4,454.0 104.8,477.8 114.6,483.4 145.3,504.4 156.5,510.0 174.7,529.5 195.6,541.8 214.4,550.4 225.0,569.8"/>
<polyline points="36.3,441.5 42.0,436.0 43.3,420.5 70.0,413.5 79.7,400.0 86.6,402.4 92.2,396.8 102.0,396.8 110.4,381.4 120.2,385.6 125.8,399.6 131.4,391.7 142.5,390.6 170.5,391.7 176.0,398.0 183.0,401.8 188.7,395.4 191.5,408.0 201.2,410.7 215.2,423.3 225.0,424.0"/>
<polyline points="0.0,484.8 11.2,487.6 39.0,473.6 68.5,463.8 83.8,466.6 109.0,470.0 128.6,463.8 145.3,468.0 167.7,465.2 225.0,463.3"/>
<polyline points="269.7,377.2 280.9,377.2 320.0,375.0 336.8,375.8 345.2,396.8 364.7,421.9 373.1,435.9 381.5,444.3 398.3,483.4 415.0,503.0 440.2,522.5 450.0,524.0"/>
<polyline points="269.7,377.2 241.8,408.0 233.4,430.3 237.6,441.5 229.2,463.8 237.6,491.8 241.8,541.8"/>
<polyline points="278.1,278.0 300.5,282.2 314.4,280.8 322.8,285.0 345.2,279.4 364.7,271.0"/>
<polyline points="300.5,271.0 308.8,290.6 303.3,301.7 307.4,321.3 307.4,354.8 320.0,377.2"/>
<polyline points="348.0,366.0 359.2,354.8 370.3,360.5 382.9,343.7 399.7,367.4 417.8,375.8 415.0,391.2 426.2,413.5 450.0,410.7 476.6,390.0 510.2,384.3 536.8,366.2 539.6,339.6 553.6,329.8 581.5,311.6 584.3,287.8 562.0,282.2 550.8,271.0 539.0,265.0"/>
<polyline points="399.7,367.4 409.5,346.5 420.6,335.3 437.4,324.0 450.0,322.7 466.8,296.2 483.6,287.8 494.8,293.4 525.6,308.8 536.8,322.8 567.5,313.0 581.5,310.2"/>
<polyline points="550.8,318.6 552.2,331.2"/>
<polyline points="503.2,271.0 494.8,293.4"/>
<polyline points="464.0,408.1 450.0,413.7"/>
<polyline points="476.6,390.0 464.0,408.1"/>
<polyline points="398.3,483.4 390.0,500.2 364.7,508.6 356.4,541.8"/>
<polyline points="578.7,482.3 618.0,471.1 668.0,471.1"/>
<polyline points="517.2,542.2 553.6,531.3 584.3,535.5 632.0,542.2"/>
<polyline points="528.4,534.1 542.4,514.5 570.3,511.7 623.5,534.1"/>
<polyline points="0.0,567.0 16.7,578.2 36.2,592.1 39.0,614.4 55.7,625.5 58.5,653.4 72.4,675.7 80.8,689.6 111.4,720.2 125.3,737.0 133.7,753.6 136.5,770.3 144.8,811.8"/>
<polyline points="0.0,647.8 11.1,653.4 26.5,678.5 27.8,689.6 41.8,703.5 50.1,723.0 44.6,731.4 61.3,748.0 72.4,770.3 83.5,787.0 97.5,811.8"/>
<polyline points="27.8,636.7 55.7,635.3 52.9,678.5 39.0,698.0 55.7,742.5 69.6,753.6 80.8,759.2 86.3,784.3 91.9,811.8"/>
<polyline points="105.8,750.8 114.2,720.2 156.0,650.6 175.4,645.0 225.0,592.1 233.4,550.4 241.7,542.0 247.3,561.5 280.7,564.3 283.5,553.1 275.1,542.0"/>
<polyline points="0.0,748.0 41.8,741.1 66.8,748.0 91.9,741.1 117.0,737.0 142.0,723.0 164.3,711.9 183.8,714.7 225.0,695.2 247.3,691.0 277.9,692.4 328.0,670.1"/>
<polyline points="0.0,759.2 19.5,753.6 27.8,745.3 64.0,756.4 66.8,770.3"/>
<polyline points="164.3,709.0 161.5,695.2 169.9,670.0 178.2,659.0 200.5,649.2 206.0,656.2 217.2,650.6 225.0,653.4 241.7,642.3 250.0,653.4 266.8,650.6 286.3,654.8 314.1,656.2"/>
<polyline points="105.8,762.0 147.6,759.2 161.5,757.8 203.3,787.0 211.6,811.8"/>
<polyline points="142.0,731.4 151.8,742.5 149.0,764.8"/>
<polyline points="225.0,568.5 247.3,569.8 283.5,583.8 305.8,597.7 336.4,625.5 345.0,640.0"/>
<polyline points="280.7,564.3 286.3,583.8 297.4,597.7 330.8,647.8"/>
<polyline points="358.7,542.0 355.9,567.0 336.4,597.7 328.0,614.4 330.8,622.8"/>
<polyline points="355.9,665.9 381.0,665.9 406.0,663.1 450.0,668.7"/>
<polyline points="357.0,671.0 385.0,671.5 410.0,668.0 450.0,672.0"/>
<polyline points="406.0,663.1 414.4,631.1 450.0,588.0 477.9,578.2 497.4,558.7 514.1,542.0"/>
<polyline points="428.3,664.5 442.2,656.2 450.0,656.3 472.3,654.9 516.9,635.4 536.4,631.2 572.7,643.8 576.8,649.3 589.4,652.1 597.8,652.1 603.3,660.5 611.7,660.5 645.1,648.0 668.0,650.7"/>
<polyline points="244.5,654.8 240.3,686.8 250.0,692.4 248.7,703.5 261.2,737.0 283.5,759.2 314.1,764.8 319.7,770.3 333.6,773.1 367.0,781.5 397.7,811.8"/>
<polyline points="353.1,672.9 369.8,737.0 364.2,762.0 381.0,811.8"/>
<polyline points="322.5,675.7 328.0,709.0 316.9,720.2 325.3,742.5 316.9,770.3 314.1,792.6 322.5,811.8"/>
<polyline points="370.0,648.0 375.0,665.0 358.0,690.0"/>
<polyline points="483.5,542.0 486.2,553.2 490.4,564.3 483.5,589.4 468.1,600.5 452.8,617.3 452.8,631.2 461.2,650.7 455.6,667.5 477.9,675.8 498.8,702.3 519.7,751.1 512.7,776.2 536.4,812.1"/>
<polyline points="450.0,670.2 463.9,668.9 494.6,698.1 509.9,745.5 503.0,762.2 509.9,770.6 498.8,779.0 497.4,790.1 514.1,812.1"/>
<polyline points="569.9,738.5 628.4,748.3 642.4,762.2 645.1,812.1"/>
<polyline points="589.4,812.1 600.5,801.3 642.4,794.3 659.1,798.5 668.0,812.1"/>
<polyline points="622.8,542.0 668.0,556.0"/>
<polyline points="450.0,588.0 420.0,610.0 400.0,630.0 380.0,640.0"/>
</g>
<path d="M321,646 L326,647 L328,651 L332,650 L330,655 L327,658 L331,663 L328,669 L323,673 L316,671 L317,664 L314,658 L318,654 L317,650 Z" fill="#3352a6"/>
<text x="599" y="117" fill="#c9c9cf" font-size="16" font-family="Liberation Sans, sans-serif">巴中市</text>
<text x="323" y="639" fill="#c9c9cf" font-size="16" font-family="Liberation Sans, sans-serif">南充市</text>
<text x="98" y="791" fill="#c9c9cf" font-size="16" font-family="Liberation Sans, sans-serif">遂宁市</text>
<defs><filter id="sh" x="-50%" y="-50%" width="200%" height="200%"><feGaussianBlur stdDeviation="1.5"/></filter></defs>
<g transform="translate(172.1,228.4)"><ellipse cx="6" cy="-4" rx="7" ry="4" fill="#000" opacity="0.55" filter="url(#sh)"/><path d="M0 0 C-2.5 -4.5 -9 -9.5 -9 -15.5 A9 9 0 1 1 9 -15.5 C9 -9.5 2.5 -4.5 0 0Z" fill="#e92d2d"/><path d="M-6.5 -18 A7 7 0 0 1 -1 -23" stroke="#ff8a8a" stroke-width="1.2" fill="none" opacity="0.8"/></g>
<g transform="translate(225.2,236.5)"><ellipse cx="6" cy="-4" rx="7" ry="4" fill="#000" opacity="0.55" filter="url(#sh)"/><path d="M0 0 C-2.5 -4.5 -9 -9.5 -9 -15.5 A9 9 0 1 1 9 -15.5 C9 -9.5 2.5 -4.5 0 0Z" fill="#e92d2d"/><path d="M-6.5 -18 A7 7 0 0 1 -1 -23" stroke="#ff8a8a" stroke-width="1.2" fill="none" opacity="0.8"/></g>
<g transform="translate(281.2,221.3)"><ellipse cx="6" cy="-4" rx="7" ry="4" fill="#000" opacity="0.55" filter="url(#sh)"/><path d="M0 0 C-2.5 -4.5 -9 -9.5 -9 -15.5 A9 9 0 1 1 9 -15.5 C9 -9.5 2.5 -4.5 0 0Z" fill="#e92d2d"/><path d="M-6.5 -18 A7 7 0 0 1 -1 -23" stroke="#ff8a8a" stroke-width="1.2" fill="none" opacity="0.8"/></g>
<g transform="translate(353.1,225.2)"><ellipse cx="6" cy="-4" rx="7" ry="4" fill="#000" opacity="0.55" filter="url(#sh)"/><path d="M0 0 C-2.5 -4.5 -9 -9.5 -9 -15.5 A9 9 0 1 1 9 -15.5 C9 -9.5 2.5 -4.5 0 0Z" fill="#e92d2d"/><path d="M-6.5 -18 A7 7 0 0 1 -1 -23" stroke="#ff8a8a" stroke-width="1.2" fill="none" opacity="0.8"/></g>
<g transform="translate(428.6,189.0)"><ellipse cx="6" cy="-4" rx="7" ry="4" fill="#000" opacity="0.55" filter="url(#sh)"/><path d="M0 0 C-2.5 -4.5 -9 -9.5 -9 -15.5 A9 9 0 1 1 9 -15.5 C9 -9.5 2.5 -4.5 0 0Z" fill="#e92d2d"/><path d="M-6.5 -18 A7 7 0 0 1 -1 -23" stroke="#ff8a8a" stroke-width="1.2" fill="none" opacity="0.8"/></g>
<g transform="translate(333.2,268.3)"><ellipse cx="6" cy="-4" rx="7" ry="4" fill="#000" opacity="0.55" filter="url(#sh)"/><path d="M0 0 C-2.5 -4.5 -9 -9.5 -9 -15.5 A9 9 0 1 1 9 -15.5 C9 -9.5 2.5 -4.5 0 0Z" fill="#e92d2d"/><path d="M-6.5 -18 A7 7 0 0 1 -1 -23" stroke="#ff8a8a" stroke-width="1.2" fill="none" opacity="0.8"/></g>
<g transform="translate(288.1,270.1)"><ellipse cx="6" cy="-4" rx="7" ry="4" fill="#000" opacity="0.55" filter="url(#sh)"/><path d="M0 0 C-2.5 -4.5 -9 -9.5 -9 -15.5 A9 9 0 1 1 9 -15.5 C9 -9.5 2.5 -4.5 0 0Z" fill="#e92d2d"/><path d="M-6.5 -18 A7 7 0 0 1 -1 -23" stroke="#ff8a8a" stroke-width="1.2" fill="none" opacity="0.8"/></g>
<g transform="translate(272.9,264.6)"><ellipse cx="6" cy="-4" rx="7" ry="4" fill="#000" opacity="0.55" filter="url(#sh)"/><path d="M0 0 C-2.5 -4.5 -9 -9.5 -9 -15.5 A9 9 0 1 1 9 -15.5 C9 -9.5 2.5 -4.5 0 0Z" fill="#e92d2d"/><path d="M-6.5 -18 A7 7 0 0 1 -1 -23" stroke="#ff8a8a" stroke-width="1.2" fill="none" opacity="0.8"/></g>
<g transform="translate(270.3,270.0)"><ellipse cx="6" cy="-4" rx="7" ry="4" fill="#000" opacity="0.55" filter="url(#sh)"/><path d="M0 0 C-2.5 -4.5 -9 -9.5 -9 -15.5 A9 9 0 1 1 9 -15.5 C9 -9.5 2.5 -4.5 0 0Z" fill="#e92d2d"/><path d="M-6.5 -18 A7 7 0 0 1 -1 -23" stroke="#ff8a8a" stroke-width="1.2" fill="none" opacity="0.8"/></g>
<g transform="translate(271.2,280.9)"><ellipse cx="6" cy="-4" rx="7" ry="4" fill="#000" opacity="0.55" filter="url(#sh)"/><path d="M0 0 C-2.5 -4.5 -9 -9.5 -9 -15.5 A9 9 0 1 1 9 -15.5 C9 -9.5 2.5 -4.5 0 0Z" fill="#e92d2d"/><path d="M-6.5 -18 A7 7 0 0 1 -1 -23" stroke="#ff8a8a" stroke-width="1.2" fill="none" opacity="0.8"/></g>
<g transform="translate(268.1,332.5)"><ellipse cx="6" cy="-4" rx="7" ry="4" fill="#000" opacity="0.55" filter="url(#sh)"/><path d="M0 0 C-2.5 -4.5 -9 -9.5 -9 -15.5 A9 9 0 1 1 9 -15.5 C9 -9.5 2.5 -4.5 0 0Z" fill="#e92d2d"/><path d="M-6.5 -18 A7 7 0 0 1 -1 -23" stroke="#ff8a8a" stroke-width="1.2" fill="none" opacity="0.8"/></g>
<g transform="translate(308.0,338.4)"><ellipse cx="6" cy="-4" rx="7" ry="4" fill="#000" opacity="0.55" filter="url(#sh)"/><path d="M0 0 C-2.5 -4.5 -9 -9.5 -9 -15.5 A9 9 0 1 1 9 -15.5 C9 -9.5 2.5 -4.5 0 0Z" fill="#e92d2d"/><path d="M-6.5 -18 A7 7 0 0 1 -1 -23" stroke="#ff8a8a" stroke-width="1.2" fill="none" opacity="0.8"/></g>
<g transform="translate(338.0,344.9)"><ellipse cx="6" cy="-4" rx="7" ry="4" fill="#000" opacity="0.55" filter="url(#sh)"/><path d="M0 0 C-2.5 -4.5 -9 -9.5 -9 -15.5 A9 9 0 1 1 9 -15.5 C9 -9.5 2.5 -4.5 0 0Z" fill="#e92d2d"/><path d="M-6.5 -18 A7 7 0 0 1 -1 -23" stroke="#ff8a8a" stroke-width="1.2" fill="none" opacity="0.8"/></g>
<g transform="translate(341.2,365.5)"><ellipse cx="6" cy="-4" rx="7" ry="4" fill="#000" opacity="0.55" filter="url(#sh)"/><path d="M0 0 C-2.5 -4.5 -9 -9.5 -9 -15.5 A9 9 0 1 1 9 -15.5 C9 -9.5 2.5 -4.5 0 0Z" fill="#e92d2d"/><path d="M-6.5 -18 A7 7 0 0 1 -1 -23" stroke="#ff8a8a" stroke-width="1.2" fill="none" opacity="0.8"/></g>
<g transform="translate(333.2,376.7)"><ellipse cx="6" cy="-4" rx="7" ry="4" fill="#000" opacity="0.55" filter="url(#sh)"/><path d="M0 0 C-2.5 -4.5 -9 -9.5 -9 -15.5 A9 9 0 1 1 9 -15.5 C9 -9.5 2.5 -4.5 0 0Z" fill="#e92d2d"/><path d="M-6.5 -18 A7 7 0 0 1 -1 -23" stroke="#ff8a8a" stroke-width="1.2" fill="none" opacity="0.8"/></g>
<g transform="translate(652.1,336.9)"><ellipse cx="6" cy="-4" rx="7" ry="4" fill="#000" opacity="0.55" filter="url(#sh)"/><path d="M0 0 C-2.5 -4.5 -9 -9.5 -9 -15.5 A9 9 0 1 1 9 -15.5 C9 -9.5 2.5 -4.5 0 0Z" fill="#e92d2d"/><path d="M-6.5 -18 A7 7 0 0 1 -1 -23" stroke="#ff8a8a" stroke-width="1.2" fill="none" opacity="0.8"/></g>
<g transform="translate(550.2,518.3)"><ellipse cx="6" cy="-4" rx="7" ry="4" fill="#000" opacity="0.55" filter="url(#sh)"/><path d="M0 0 C-2.5 -4.5 -9 -9.5 -9 -15.5 A9 9 0 1 1 9 -15.5 C9 -9.5 2.5 -4.5 0 0Z" fill="#e92d2d"/><path d="M-6.5 -18 A7 7 0 0 1 -1 -23" stroke="#ff8a8a" stroke-width="1.2" fill="none" opacity="0.8"/></g>
<g transform="translate(346.1,680.8)"><ellipse cx="6" cy="-4" rx="7" ry="4" fill="#000" opacity="0.55" filter="url(#sh)"/><path d="M0 0 C-2.5 -4.5 -9 -9.5 -9 -15.5 A9 9 0 1 1 9 -15.5 C9 -9.5 2.5 -4.5 0 0Z" fill="#e92d2d"/><path d="M-6.5 -18 A7 7 0 0 1 -1 -23" stroke="#ff8a8a" stroke-width="1.2" fill="none" opacity="0.8"/></g>
</svg>
</div>

<div class="abs" style="left:220px;top:516px;width:27px;height:40px;background:#cbd3dc"></div>
<svg class="abs" style="left:221px;top:527px" width="16" height="16" viewBox="0 0 16 16"><circle cx="8" cy="8" r="7.5" fill="#383838"/><path d="M9.8 3.8L5.5 8l4.3 4.2" fill="none" stroke="#e8eef4" stroke-width="2.2"/></svg>

<div class="flt" style="left:913px;width:160px"><div class="t" style="left:12px">名称</div></div>
<div class="flt" style="left:1077px;width:250px"><div class="t">行政区域名称</div>
  <svg style="left:228px" width="13" height="9"><path d="M1 1.5l5.5 5.5 5.5-5.5" fill="none" stroke="#c8cde0" stroke-width="1.6"/></svg></div>
<div class="flt" style="left:1330px;width:180px"><div class="t" style="left:12px">所有行业</div>
  <svg style="left:157px" width="13" height="9"><path d="M1 1.5l5.5 5.5 5.5-5.5" fill="none" stroke="#c8cde0" stroke-width="1.6"/></svg></div>
<div class="flt" style="left:1514px;width:130px"><div class="t" style="left:12px">所有状态</div>
  <svg style="left:107px" width="13" height="9"><path d="M1 1.5l5.5 5.5 5.5-5.5" fill="none" stroke="#c8cde0" stroke-width="1.6"/></svg></div>

<div id="thead">
  <div class="th" style="left:57px;top:24px">行政区域</div>
  <div class="th" style="left:206px;top:24px">企业</div>
  <div class="th" style="left:355px;top:24px">行业</div>
  <div class="th" style="left:477px;top:24px">停限产</div>
  <div class="th" style="left:572px;top:24px">治污设施</div>
  <div class="th" style="left:666px;top:24px">监测点</div>
  <div class="th" style="left:753px;top:24px">总表</div>
  <div class="th" style="left:887px;top:9px;transform:skewX(-14deg)">点位状态</div>
  <div class="th" style="left:840px;top:39px">运行</div>
  <div class="th" style="left:893px;top:39px">停机</div>
  <div class="th" style="left:946px;top:39px">失联</div>
</div>
<div id="tbody">
<div class="tr odd" style="top:0px"><span class="c0">1</span><span class="c1">阆中生态环境局</span><span class="c2">阆中强锐页岩砖厂</span><span class="c3">砖瓦行业</span><span class="c4"><i class="dot dg"></i>无计划</span><span class="c5"><i class="dot dg"></i>正常</span><span class="c6">2</span><span class="c7">1</span><span class="c8">1</span><span class="c9">2</span><span class="c10">0</span></div>
<div class="tr even" style="top:36px"><span class="c0">2</span><span class="c1">阆中生态环境局</span><span class="c2">阆中市南方节能建材有</span><span class="c3">砖瓦行业</span><span class="c4"><i class="dot dg"></i>无计划</span><span class="c5"><i class="dot dg"></i>正常</span><span class="c6">2</span><span class="c7">1</span><span class="c8">0</span><span class="c9">3</span><span class="c10">0</span></div>
<div class="tr odd" style="top:72px"><span class="c0">3</span><span class="c1">仪陇生态环境局</span><span class="c2">西南油气田分公司川中</span><span class="c3">化工</span><span class="c4"><i class="dot dg"></i>无计划</span><span class="c5"><i class="dot dg"></i>正常</span><span class="c6">7</span><span class="c7">1</span><span class="c8">3</span><span class="c9">5</span><span class="c10">0</span></div>
<div class="tr even" style="top:108px"><span class="c0">4</span><span class="c1">高坪生态环境局</span><span class="c2">南充市高坪区王家店建</span><span class="c3">砖瓦行业</span><span class="c4"><i class="dot dg"></i>无计划</span><span class="c5"><i class="dot dg"></i>正常</span><span class="c6">3</span><span class="c7">1</span><span class="c8">2</span><span class="c9">2</span><span class="c10">0</span></div>
<div class="tr odd" style="top:144px"><span class="c0">5</span><span class="c1">营山生态环境局</span><span class="c2">营山县润丰肉食品有限</span><span class="c3">食品</span><span class="c4"><i class="dot dg"></i>无计划</span><span class="c5"><i class="dot dg"></i>正常</span><span class="c6">1</span><span class="c7">0</span><span class="c8">0</span><span class="c9">1</span><span class="c10">0</span></div>
<div class="tr even" style="top:180px"><span class="c0">6</span><span class="c1">阆中生态环境局</span><span class="c2">阆中市金博瑞新型墙材</span><span class="c3">砖瓦行业</span><span class="c4"><i class="dot dg"></i>无计划</span><span class="c5"><i class="dot dg"></i>正常</span><span class="c6">2</span><span class="c7">1</span><span class="c8">1</span><span class="c9">2</span><span class="c10">0</span></div>
<div class="tr odd" style="top:216px"><span class="c0">7</span><span class="c1">阆中生态环境局</span><span class="c2">阆中明阳建材有限公司</span><span class="c3">砖瓦行业</span><span class="c4"><i class="dot dg"></i>无计划</span><span class="c5"><i class="dot dg"></i>正常</span><span class="c6">2</span><span class="c7">1</span><span class="c8">3</span><span class="c9">0</span><span class="c10">0</span></div>
<div class="tr even" style="top:252px"><span class="c0">8</span><span class="c1">阆中生态环境局</span><span class="c2">阆中市枣碧大梁山页岩</span><span class="c3">砖瓦行业</span><span class="c4"><i class="dot dg"></i>无计划</span><span class="c5"><i class="dot dr"></i>异常</span><span class="c6">2</span><span class="c7">1</span><span class="c8">3</span><span class="c9">0</span><span class="c10">0</span></div>
<div class="tr odd" style="top:288px"><span class="c0">9</span><span class="c1">阆中生态环境局</span><span class="c2">阆中市二龙长宝页岩砖</span><span class="c3">砖瓦行业</span><span class="c4"><i class="dot dg"></i>无计划</span><span class="c5"><i class="dot dg"></i>正常</span><span class="c6">2</span><span class="c7">1</span><span class="c8">1</span><span class="c9">2</span><span class="c10">0</span></div>
<div class="tr even" style="top:324px"><span class="c0 sel">10</span><span class="c1">阆中生态环境局</span><span class="c2">阆中千佛镇五郎垭页岩</span><span class="c3">砖瓦行业</span><span class="c4"><i class="dot dg"></i>无计划</span><span class="c5"><i class="dot dg"></i>正常</span><span class="c6">2</span><span class="c7">1</span><span class="c8">0</span><span class="c9">0</span><span class="c10">3</span></div>
<div class="tr odd" style="top:360px"><span class="c0">11</span><span class="c1">阆中生态环境局</span><span class="c2">阆中市五马桥页岩机砖</span><span class="c3">砖瓦行业</span><span class="c4"><i class="dot dg"></i>无计划</span><span class="c5"><i class="dot dg"></i>正常</span><span class="c6">2</span><span class="c7">1</span><span class="c8">1</span><span class="c9">2</span><span class="c10">0</span></div>
<div class="tr even" style="top:396px"><span class="c0 sel">12</span><span class="c1">阆中生态环境局</span><span class="c2">阆中市忠信建材有限公</span><span class="c3">砖瓦行业</span><span class="c4"><i class="dot dg"></i>无计划</span><span class="c5"><i class="dot dg"></i>正常</span><span class="c6">2</span><span class="c7">1</span><span class="c8">0</span><span class="c9">0</span><span class="c10">3</span></div>
<div class="tr odd" style="top:432px"><span class="c0">13</span><span class="c1">阆中生态环境局</span><span class="c2">阆中市金福旺页岩机砖</span><span class="c3">砖瓦行业</span><span class="c4"><i class="dot dg"></i>无计划</span><span class="c5"><i class="dot dg"></i>正常</span><span class="c6">2</span><span class="c7">1</span><span class="c8">3</span><span class="c9">0</span><span class="c10">0</span></div>
<div class="tr even" style="top:468px"><span class="c0">14</span><span class="c1">阆中生态环境局</span><span class="c2">阆中大兴页岩机砖厂</span><span class="c3">砖瓦行业</span><span class="c4"><i class="dot dg"></i>无计划</span><span class="c5"><i class="dot dg"></i>正常</span><span class="c6">2</span><span class="c7">1</span><span class="c8">1</span><span class="c9">2</span><span class="c10">0</span></div>
<div class="tr odd" style="top:504px"><span class="c0">15</span><span class="c1">阆中生态环境局</span><span class="c2">阆中市光富页岩机砖厂</span><span class="c3">砖瓦行业</span><span class="c4"><i class="dot dg"></i>无计划</span><span class="c5"><i class="dot dg"></i>正常</span><span class="c6">2</span><span class="c7">1</span><span class="c8">1</span><span class="c9">2</span><span class="c10">0</span></div>
<div class="tr even" style="top:540px"><span class="c0">16</span><span class="c1">阆中生态环境局</span><span class="c2">阆中市石子页岩机砖厂</span><span class="c3">砖瓦行业</span><span class="c4"><i class="dot dg"></i>无计划</span><span class="c5"><i class="dot dg"></i>正常</span><span class="c6">2</span><span class="c7">1</span><span class="c8">3</span><span class="c9">0</span><span class="c10">0</span></div>
<div class="tr odd" style="top:576px"><span class="c0">17</span><span class="c1">阆中生态环境局</span><span class="c2">阆中市江南镇阆南页岩</span><span class="c3">砖瓦行业</span><span class="c4"><i class="dot dg"></i>无计划</span><span class="c5"><i class="dot dg"></i>正常</span><span class="c6">2</span><span class="c7">1</span><span class="c8">0</span><span class="c9">3</span><span class="c10">0</span></div>
<div class="tr even" style="top:612px"><span class="c0">18</span><span class="c1">南部生态环境局</span><span class="c2">南部县利华水泥有限公</span><span class="c3">建材加工</span><span class="c4"><i class="dot dg"></i>无计划</span><span class="c5"><i class="dot dg"></i>正常</span><span class="c6">6</span><span class="c7">0</span><span class="c8">0</span><span class="c9">6</span><span class="c10">0</span></div>
</div>
<div id="scroll"></div><div id="thumb"></div>
<div id="pager">
  <svg class="abs" style="left:350px;top:13px" width="11" height="14"><path d="M0 0h2.5v14H0z M11 0v14L3 7z" fill="#4a5f9a"/></svg>
  <svg class="abs" style="left:379px;top:13px" width="14" height="14"><path d="M0 7l7-7v14z M7 7l7-7v14z" fill="#4a5f9a"/></svg>
  <div class="abs" style="left:409px;top:11px;width:1px;height:18px;background:#8a96b8"></div>
  <div class="abs" style="left:427px;top:11px;width:40px;height:17px;background:#22387c"></div>
  <div class="abs" style="left:434px;top:9px;line-height:20px;color:#d0d5e6">1</div>
  <div class="abs" style="left:470px;top:8px;line-height:20px;color:#d0d5e6">共 3 页</div>
  <div class="abs" style="left:529px;top:11px;width:1px;height:18px;background:#8a96b8"></div>
  <svg class="abs" style="left:545px;top:13px" width="14" height="14"><path d="M0 0l7 7-7 7z M7 0l7 7-7 7z" fill="#d0d5e6"/></svg>
  <svg class="abs" style="left:578px;top:13px" width="11" height="14"><path d="M0 0l8 7-8 7z M8.5 0H11v14H8.5z" fill="#d0d5e6"/></svg>
  <div class="abs" style="left:603px;top:8px;width:40px;height:22px;background:#22387c"></div>
  <div class="abs" style="left:610px;top:10px;line-height:20px;color:#d0d5e6">20</div>
  <svg class="abs" style="left:631px;top:16px" width="9" height="6"><path d="M1 1l3.5 3.5L8 1" fill="none" stroke="#d0d5e6" stroke-width="1.6"/></svg>
  <div class="abs" style="left:879px;top:8px;line-height:20px;color:#d0d5e6">1 - 20&nbsp;&nbsp;&nbsp; 共 47 条</div>
</div>
</body></html>
